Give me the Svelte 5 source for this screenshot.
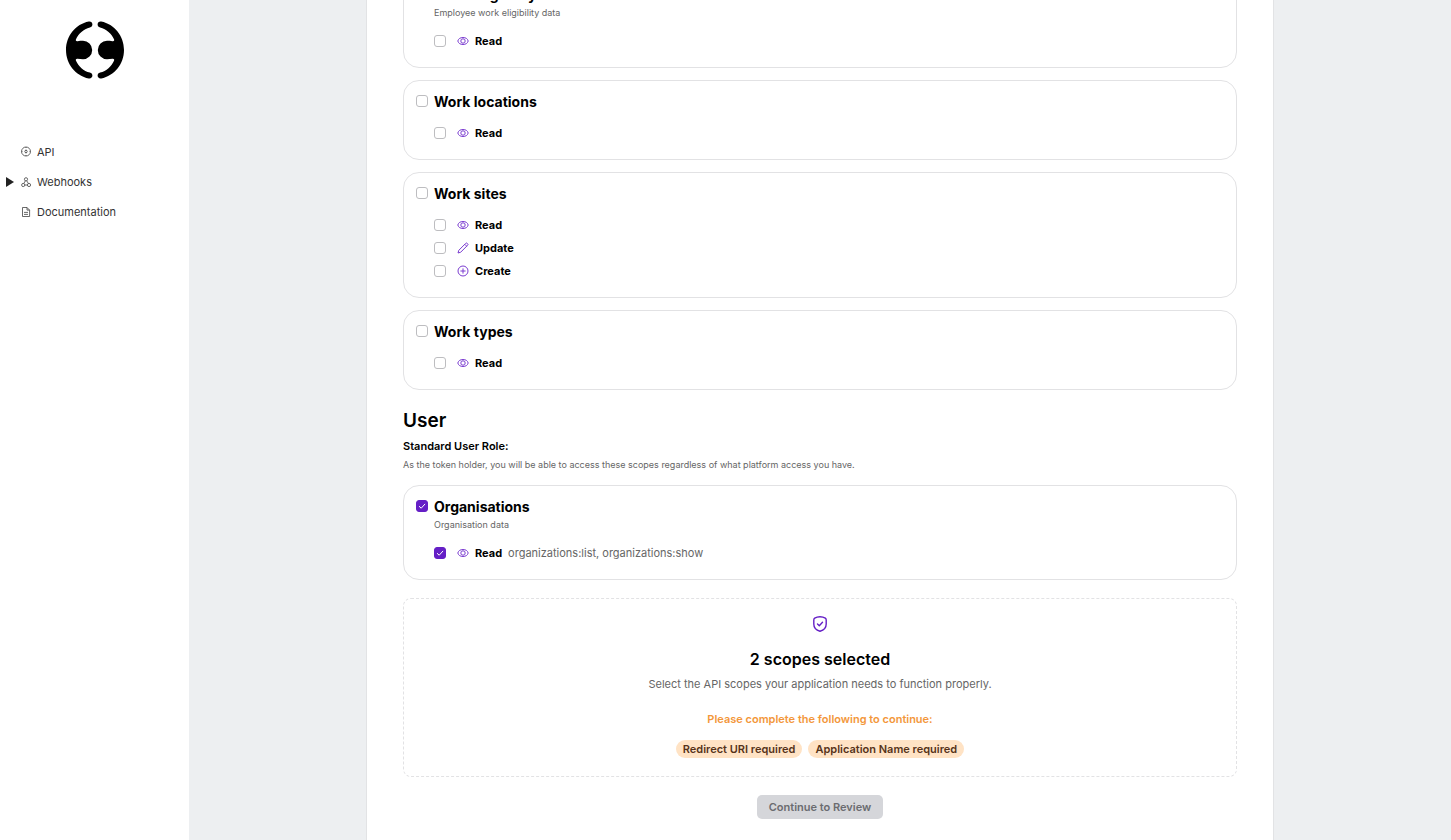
<script lang="ts">
  type Action = 'Read' | 'Update' | 'Create';

  type Permission = {
    action: Action;
    checked: boolean;
    scopes?: string;
  };

  type ScopeGroup = {
    id: string;
    title: string;
    description?: string;
    checked: boolean;
    permissions: Permission[];
  };

  let companyGroups = $state<ScopeGroup[]>([
    {
      id: 'work-eligibility',
      title: 'Work eligibility',
      description: 'Employee work eligibility data',
      checked: false,
      permissions: [{ action: 'Read', checked: false }]
    },
    {
      id: 'work-locations',
      title: 'Work locations',
      checked: false,
      permissions: [{ action: 'Read', checked: false }]
    },
    {
      id: 'work-sites',
      title: 'Work sites',
      checked: false,
      permissions: [
        { action: 'Read', checked: false },
        { action: 'Update', checked: false },
        { action: 'Create', checked: false }
      ]
    },
    {
      id: 'work-types',
      title: 'Work types',
      checked: false,
      permissions: [{ action: 'Read', checked: false }]
    }
  ]);

  let userGroups = $state<ScopeGroup[]>([
    {
      id: 'organisations',
      title: 'Organisations',
      description: 'Organisation data',
      checked: true,
      permissions: [
        { action: 'Read', checked: true, scopes: 'organizations:list, organizations:show' }
      ]
    }
  ]);

  const missing = ['Redirect URI required', 'Application Name required'];

  // each permission carries its own list of scopes
  let selectedCount = $derived(
    [...companyGroups, ...userGroups]
      .flatMap(g => g.permissions)
      .filter(p => p.checked)
      .reduce((sum, p) => sum + (p.scopes ? p.scopes.split(',').length : 1), 0)
  );

  function toggleGroup(group: ScopeGroup) {
    for (const p of group.permissions) {
      p.checked = group.checked;
    }
  }

  function syncGroup(group: ScopeGroup) {
    group.checked = group.permissions.every(p => p.checked);
  }
</script>

{#snippet actionIcon(action: Action)}
  <svg class="action-icon" viewBox="0 0 12 12" aria-hidden="true">
    {#if action === 'Read'}
      <path d="M.8 6C1.400 3.600 3.500 2.500 6 2.500S10.600 3.600 11.200 6C10.600 8.400 8.500 9.500 6 9.500S1.400 8.400.8 6Z" />
      <circle cx="6" cy="6" r="2.200" />
    {:else if action === 'Update'}
      <path d="M1 11 1.800 8.300 8.700 1.400a1.100 1.100 0 0 1 1.600 0l.3.300a1.100 1.100 0 0 1 0 1.600L3.700 10.200ZM7.800 2.300l1.900 1.900" />
    {:else}
      <circle cx="6" cy="6" r="5" />
      <path d="M6 3.400v5.200M3.400 6h5.200" />
    {/if}
  </svg>
{/snippet}

{#snippet scopeCard(group: ScopeGroup)}
  <section class="card">
    <div class="card-head">
      <input
        type="checkbox"
        id={group.id}
        bind:checked={group.checked}
        onchange={() => toggleGroup(group)}
      />
      <h3><label for={group.id}>{group.title}</label></h3>
    </div>
    {#if group.description}
      <p class="card-desc">{group.description}</p>
    {/if}
    <ul class="permissions">
      {#each group.permissions as permission}
        <li>
          <label class="permission">
            <input
              type="checkbox"
              bind:checked={permission.checked}
              onchange={() => syncGroup(group)}
            />
            {@render actionIcon(permission.action)}
            <strong>{permission.action}</strong>
            {#if permission.scopes && permission.checked}
              <span class="scopes">{permission.scopes}</span>
            {/if}
          </label>
        </li>
      {/each}
    </ul>
  </section>
{/snippet}

<div class="shell">
  <aside class="sidebar">
    <a class="logo" href="#home" aria-label="Home">
      <svg viewBox="0 0 60 60" aria-hidden="true">
        <path id="logo-half" d="M23.800 1.500C10.500 4.200 1 16 1 30s9.500 25.800 22.800 28.500c2 .400 3.600-1 3.600-2.900 0-1.500-1-2.600-2.500-3C18.500 50.900 13.500 46.500 11 40.700c-.6-1.400.3-2.200 1.600-1.900 1.700.4 3.500.4 5.400.4a9.200 9.200 0 0 0 0-18.400c-1.900 0-3.700 0-5.400.4-1.300.3-2.200-.5-1.600-1.900C13.500 13.500 18.500 9.100 24.900 7.400c1.500-.4 2.500-1.500 2.500-3 0-1.900-1.600-3.300-3.600-2.900Z" />
        <use href="#logo-half" transform="translate(60 0) scale(-1 1)" />
      </svg>
    </a>

    <nav aria-label="Main">
      <ul>
        <li>
          <a href="#api">
            <span class="caret"></span>
            <svg class="nav-icon" viewBox="0 0 12 12" aria-hidden="true">
              <circle cx="6" cy="5.500" r="4.500" />
              <circle cx="6" cy="5.500" r="1.200" />
              <path d="M6 1v1M6 9v1M1.500 5.500h1M9.500 5.500h1M6 3.600v1M6 6.400v1" />
            </svg>
            API
          </a>
        </li>
        <li>
          <a href="#webhooks">
            <span class="caret">
              <svg viewBox="0 0 8 10" aria-hidden="true"><path d="M0 0 8 5 0 10Z" /></svg>
            </span>
            <svg class="nav-icon" viewBox="0 0 12 12" aria-hidden="true">
              <circle cx="6" cy="3.300" r="1.600" />
              <circle cx="3.200" cy="9" r="1.600" />
              <circle cx="9" cy="9" r="1.600" />
              <path d="M5.400 4.800 3.800 7.500M6.700 4.800l1.700 2.700M4.800 9h2.600" />
            </svg>
            Webhooks
          </a>
        </li>
        <li>
          <a href="#documentation">
            <span class="caret"></span>
            <svg class="nav-icon" viewBox="0 0 12 12" aria-hidden="true">
              <path d="M2.500 1.500h4.500l2.600 2.600v6.400H2.500ZM7 1.500v2.600h2.600M4 6.400h4M4 8.400h4" />
            </svg>
            Documentation
          </a>
        </li>
      </ul>
    </nav>
  </aside>

  <main>
    <div class="panel">
      <div class="cards">
        {#each companyGroups as group (group.id)}
          {@render scopeCard(group)}
        {/each}
      </div>

      <h2>User</h2>
      <h4>Standard User Role:</h4>
      <p class="role-desc">
        As the token holder, you will be able to access these scopes regardless of what platform access you have.
      </p>

      <div class="cards">
        {#each userGroups as group (group.id)}
          {@render scopeCard(group)}
        {/each}
      </div>

      <section class="summary">
        <svg class="shield" viewBox="0 0 18 18" aria-hidden="true">
          <path d="M9 1.800C11 1.800 13 2.400 14.300 3.200c.6.400.9 1 .9 1.700V9c0 3.700-2.500 6.200-6.200 7.200C5.300 15.200 2.800 12.700 2.800 9V4.900c0-.7.3-1.300.9-1.700C5 2.400 7 1.800 9 1.800Z" />
          <path d="m6.500 9 1.800 1.700 3.200-3.400" />
        </svg>
        <h3>{selectedCount} scopes selected</h3>
        <p class="summary-text">Select the API scopes your application needs to function properly.</p>
        <p class="warning">Please complete the following to continue:</p>
        <ul class="chips">
          {#each missing as item}
            <li>{item}</li>
          {/each}
        </ul>
      </section>

      <button type="button" class="continue" disabled>Continue to Review</button>
    </div>
  </main>
</div>

<style>
  :global(body) {
    margin: 0;
    background: #edeff1;
  }

  .shell {
    display: flex;
    height: 100vh;
    overflow: hidden;
    font-family: Inter, 'Open Sans', sans-serif;
    font-size: 11px;
    line-height: 18px;
    color: #000;
  }

  h2,
  h3,
  h4,
  p,
  ul {
    margin: 0;
    padding: 0;
  }

  ul {
    list-style: none;
  }

  .sidebar {
    flex: none;
    width: 189px;
    background: #fff;
  }

  .logo {
    display: block;
    width: 60px;
    height: 60px;
    margin: 20px auto 0;
  }

  .logo svg {
    display: block;
  }

  nav {
    margin-top: 57px;
  }

  nav a {
    display: flex;
    align-items: center;
    height: 30px;
    padding-left: 6px;
    color: #333;
    text-decoration: none;
  }

  .caret {
    display: flex;
    width: 14px;
  }

  .caret svg {
    width: 8px;
    height: 10px;
    fill: #222;
  }

  .nav-icon {
    width: 12px;
    height: 12px;
    margin-right: 5px;
    fill: none;
    stroke: #444;
    stroke-width: 0.8;
  }

  main {
    display: flex;
    flex: 1;
    flex-direction: column;
    align-items: center;
    justify-content: flex-end;
    min-width: 0;
    background: #edeff1;
  }

  .panel {
    display: flex;
    flex-direction: column;
    box-sizing: border-box;
    width: 100%;
    max-width: 908px;
    padding: 36px 36px 21px;
    border: 1px solid #e2e3e5;
    border-bottom: 0;
    background: #fff;
  }

  .cards {
    display: flex;
    flex-direction: column;
    gap: 12px;
  }

  .card {
    padding: 12px 12px 17px;
    border: 1px solid #e2e2e4;
    border-radius: 16px;
  }

  .card-head {
    display: flex;
    align-items: center;
    gap: 6px;
  }

  .card-head h3 {
    font-size: 14px;
    font-weight: 700;
  }

  .card-desc {
    margin: 2px 0 0 18px;
    font-size: 9px;
    line-height: 13px;
    color: #666;
  }

  .permissions {
    display: flex;
    flex-direction: column;
    gap: 5px;
    margin: 13px 0 0 18px;
  }

  .permission {
    display: flex;
    align-items: center;
    width: fit-content;
  }

  .permission strong {
    font-weight: 700;
  }

  input[type='checkbox'] {
    flex: none;
    appearance: none;
    width: 12px;
    height: 12px;
    margin: 0;
    border: 1px solid #bdbdc0;
    border-radius: 3px;
    background: #fff;
  }

  .card-head input[type='checkbox'] {
    margin-bottom: 2px;
  }

  input[type='checkbox']:checked {
    border-color: #651fc6;
    background: #651fc6
      url("data:image/svg+xml,%3Csvg xmlns='http://www.w3.org/2000/svg' viewBox='0 0 10 10'%3E%3Cpath d='m2 5.200 2.200 2 3.900-4.300' fill='none' stroke='white' stroke-width='1'/%3E%3C/svg%3E")
      center / 10px 10px no-repeat;
  }

  .action-icon {
    width: 12px;
    height: 12px;
    margin: 0 6px 0 11px;
    fill: none;
    stroke: #7a3bd0;
    stroke-width: 1;
  }

  .scopes {
    margin-left: 6px;
    color: #666;
  }

  h2 {
    margin-top: 19px;
    font-size: 19px;
    font-weight: 600;
    line-height: 24px;
  }

  h4 {
    margin-top: 5px;
    font-size: 11px;
    font-weight: 600;
    line-height: 16px;
  }

  .role-desc {
    margin: 4px 0 13px;
    font-size: 9px;
    line-height: 14px;
    color: #666;
  }

  .summary {
    display: flex;
    flex-direction: column;
    align-items: center;
    margin-top: 18px;
    padding: 16px 12px 18px;
    border: 1px dashed #e2e2e4;
    border-radius: 8px;
    text-align: center;
  }

  .shield {
    width: 18px;
    height: 18px;
    fill: none;
    stroke: #651fc6;
    stroke-width: 1.4;
    stroke-linejoin: round;
    stroke-linecap: round;
  }

  .summary h3 {
    margin-top: 16px;
    font-size: 16px;
    font-weight: 600;
    line-height: 20px;
  }

  .summary-text {
    margin-top: 6px;
    color: #666;
  }

  .warning {
    margin-top: 17px;
    font-weight: 600;
    color: #f3973b;
  }

  .chips {
    display: flex;
    flex-wrap: wrap;
    gap: 6px;
    margin-top: 12px;
  }

  .chips li {
    padding: 0 7px;
    border-radius: 9px;
    background: #ffe3c5;
    font-weight: 600;
    color: #56331a;
  }

  .continue {
    align-self: center;
    height: 24px;
    margin-top: 18px;
    padding: 0 12px;
    border: 0;
    border-radius: 5px;
    background: #d5d6da;
    font: inherit;
    font-weight: 600;
    color: #6b6c70;
  }
</style>
